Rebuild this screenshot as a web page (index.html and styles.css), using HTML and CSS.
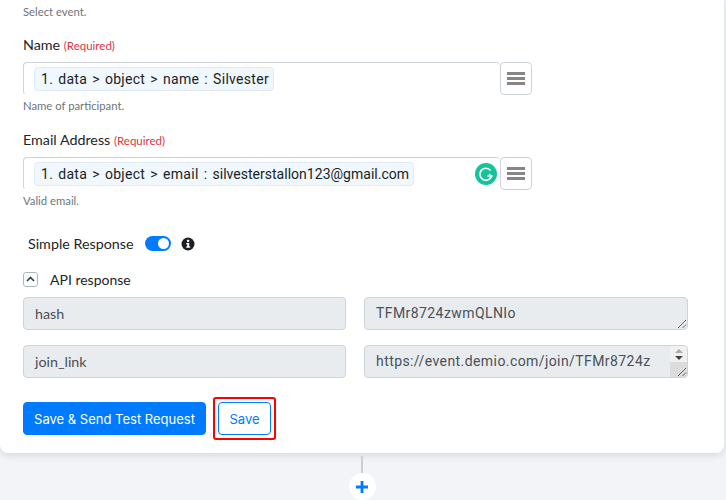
FILE: index.html
```html
<!DOCTYPE html>
<html lang="en">
<head>
<meta charset="utf-8">
<title>API response</title>
<link rel="stylesheet" href="styles.css">
</head>
<body>
<main class="card">
  <p class="hint hint-top">Select event.</p>

  <div class="field">
    <div class="label">Name <span class="req">(Required)</span></div>
    <div class="input-row">
      <div class="tag-input"><span class="tag">1. data &gt; object &gt; name : Silvester</span></div>
      <button class="menu-btn" aria-label="Menu"><span></span><span></span><span></span></button>
    </div>
    <p class="hint">Name of participant.</p>
  </div>

  <div class="field">
    <div class="label">Email Address <span class="req">(Required)</span></div>
    <div class="input-row">
      <div class="tag-input">
        <span class="tag">1. data &gt; object &gt; email : <span class="tag-tight">silvesterstallon123@gmail.com</span></span>
        <svg class="grammarly" width="22" height="22" viewBox="0 0 22 22">
          <circle cx="11" cy="11" r="11" fill="#15c39a"/>
          <path d="M15.6 7.6A6 6 0 1 0 16.6 13H12.4" fill="none" stroke="#fff" stroke-width="1.6"/>
          <path d="M14 10.9l2.9 2.1-2.1 2.4" fill="none" stroke="#fff" stroke-width="1.2"/>
        </svg>
      </div>
      <button class="menu-btn" aria-label="Menu"><span></span><span></span><span></span></button>
    </div>
    <p class="hint">Valid email.</p>
  </div>

  <div class="switch-row">
    <span class="switch-label">Simple Response</span>
    <span class="switch"><span class="knob"></span></span>
    <svg class="info" width="14" height="14" viewBox="0 0 14 14">
      <circle cx="7" cy="7" r="6.5" fill="#1b1f24"/>
      <rect x="6" y="2.8" width="2.2" height="2.1" fill="#fff"/>
      <path d="M5.2 6h3v3.6h1v1.2H5.2V9.6h1V7.2h-1z" fill="#fff"/>
    </svg>
  </div>

  <div class="api-head">
    <span class="collapse">
      <svg width="9" height="6" viewBox="0 0 9 6"><path d="M1 5l3.500-3.500L8 5" fill="none" stroke="#343a40" stroke-width="1.600"/></svg>
    </span>
    <span class="api-title">API response</span>
  </div>

  <div class="pairs">
    <div class="box box-key">hash</div>
    <div class="box">TFMr8724zwmQLNIo
      <svg class="grip" width="11" height="11" viewBox="0 0 11 11"><path d="M2 10L10 2M6.500 10L10 6.500" stroke="#666" stroke-width="1"/></svg>
    </div>
    <div class="box box-key">join_link</div>
    <div class="box box-scroll">https://event.demio.com/join/TFMr8724z
      <span class="scrollbar">
        <span class="scroll-top">
          <svg width="10" height="13" viewBox="0 0 10 13"><path d="M5 1L9 5H1z" fill="#aaa"/><path d="M5 12L1 8h8z" fill="#444"/></svg>
        </span>
      </span>
      <svg class="grip" width="11" height="11" viewBox="0 0 11 11"><path d="M2 10L10 2M6.500 10L10 6.500" stroke="#666" stroke-width="1"/></svg>
    </div>
  </div>

  <div class="actions">
    <button class="btn btn-primary">Save &amp; Send Test Request</button>
    <span class="highlight"><button class="btn btn-outline">Save</button></span>
  </div>
</main>

<div class="connector">
  <span class="line"></span>
  <span class="plus">
    <svg width="14" height="14" viewBox="0 0 14 14"><path d="M7 1v12M1 7h12" stroke="#007bff" stroke-width="2.800"/></svg>
  </span>
</div>
</body>
</html>
```

FILE: styles.css
```css
* { box-sizing: border-box; }

html, body { margin: 0; height: 500px; overflow: hidden; }

body {
  background: #f2f4f8;
  font-family: "Lato", "Liberation Sans", sans-serif;
  color: #212529;
  width: 726px;
}

.card {
  width: 724px;
  height: 453px;
  background: #fff;
  border-radius: 0 0 8px 8px;
  box-shadow: 0 2px 8px rgba(0, 0, 0, .12);
  padding: 5px 0 0 23px;
}

.hint {
  margin: 4px 0 0;
  font-size: 11.300px;
  line-height: 13px;
  color: #6c757d;
}

.hint-top { margin: 0; }

.field { margin-top: 17px; }
.field + .field { margin-top: 18px; }

.label {
  font-size: 14.300px;
  line-height: 20px;
  margin-bottom: 6px;
  color: #212529;
}

.req { font-size: 11.500px; color: #dc3545; }

.input-row { display: flex; height: 33px; width: 509px; }

.tag-input {
  flex: 1;
  display: flex;
  align-items: center;
  justify-content: space-between;
  padding: 0 3px 0 10px;
  border: 1px solid #ced4da;
  border-right: 0;
  border-bottom-color: transparent;
  border-radius: 4px 4px 0 4px;
  height: 33px;
}

.tag {
  display: inline-block;
  background: #f0f7fd;
  border: 1px solid #e0ebf5;
  border-radius: 4px;
  font-family: "Roboto", "Liberation Sans", sans-serif;
  font-size: 14px;
  letter-spacing: .3px;
  word-spacing: 1.300px;
  line-height: 22px;
  padding: 0 4px 0 6px;
  color: #1b1f24;
  white-space: nowrap;
}

.tag-tight { letter-spacing: .02px; }

.grammarly { display: block; }

.menu-btn {
  width: 32px;
  height: 33px;
  padding: 0;
  background: #fff;
  border: 1px solid #ced4da;
  border-radius: 4px;
  display: flex;
  flex-direction: column;
  align-items: center;
  justify-content: center;
  gap: 2px;
}

.menu-btn span {
  width: 18px;
  height: 3px;
  background: #868686;
}

.switch-row {
  display: flex;
  align-items: center;
  margin: 27px 0 0 5px;
  height: 19px;
}

.switch-label { font-size: 14.300px; margin-right: 11px; }

.switch {
  width: 26px;
  height: 15px;
  border-radius: 8px;
  background: #007bff;
  display: flex;
  align-items: center;
  justify-content: flex-end;
  padding-right: 2px;
  margin-right: 10px;
}

.knob { width: 11px; height: 11px; border-radius: 50%; background: #fff; }

.api-head {
  display: flex;
  align-items: center;
  margin-top: 16px;
  height: 20px;
}

.collapse {
  width: 15px;
  height: 15px;
  border: 1px solid #adb5bd;
  border-radius: 3px;
  display: flex;
  align-items: center;
  justify-content: center;
  margin-right: 12px;
}

.api-title { font-size: 14px; }

.pairs {
  display: grid;
  grid-template-columns: 323px 324px;
  column-gap: 18px;
  row-gap: 15px;
  margin-top: 8px;
}

.box {
  position: relative;
  height: 33px;
  background: #e9ecef;
  border: 1px solid #ced4da;
  border-radius: 4px;
  padding: 0 11px;
  font-family: "Roboto", "Liberation Sans", sans-serif;
  font-size: 14px;
  letter-spacing: .42px;
  line-height: 31px;
  color: #495057;
  white-space: nowrap;
  overflow: hidden;
}

.box-key {
  font-family: "Lato", "Liberation Sans", sans-serif;
  font-size: 14.300px;
  letter-spacing: 0;
}

.grip { position: absolute; right: 0; bottom: 0; }

.scrollbar {
  position: absolute;
  top: 0;
  right: 0;
  bottom: 0;
  width: 17px;
  background: #dcdcdc;
}

.scroll-top {
  display: flex;
  justify-content: center;
  align-items: center;
  height: 16px;
  background: #f1f1f1;
}

.actions {
  display: flex;
  align-items: center;
  margin-top: 24px;
  gap: 12px;
}

.btn {
  height: 33px;
  border-radius: 4px;
  font-family: "Inter", "Liberation Sans", sans-serif;
  font-size: 13px;
  padding: 0;
  border: 1px solid #007bff;
}

.btn-primary { width: 183px; background: #007bff; color: #fff; }

.btn-outline { width: 53px; background: #fff; color: #007bff; display: block; }

.highlight {
  margin: -5px;
  padding: 3px;
  border: 2px solid #f00;
  border-radius: 3px;
}

.connector {
  width: 726px;
  display: flex;
  flex-direction: column;
  align-items: center;
  padding-right: 2px;
}

.line {
  width: 2px;
  height: 17px;
  margin-top: 3px;
  background: #ccd0d5;
}

.plus {
  width: 27px;
  height: 27px;
  border-radius: 50%;
  background: #fff;
  display: flex;
  align-items: center;
  justify-content: center;
}
```
